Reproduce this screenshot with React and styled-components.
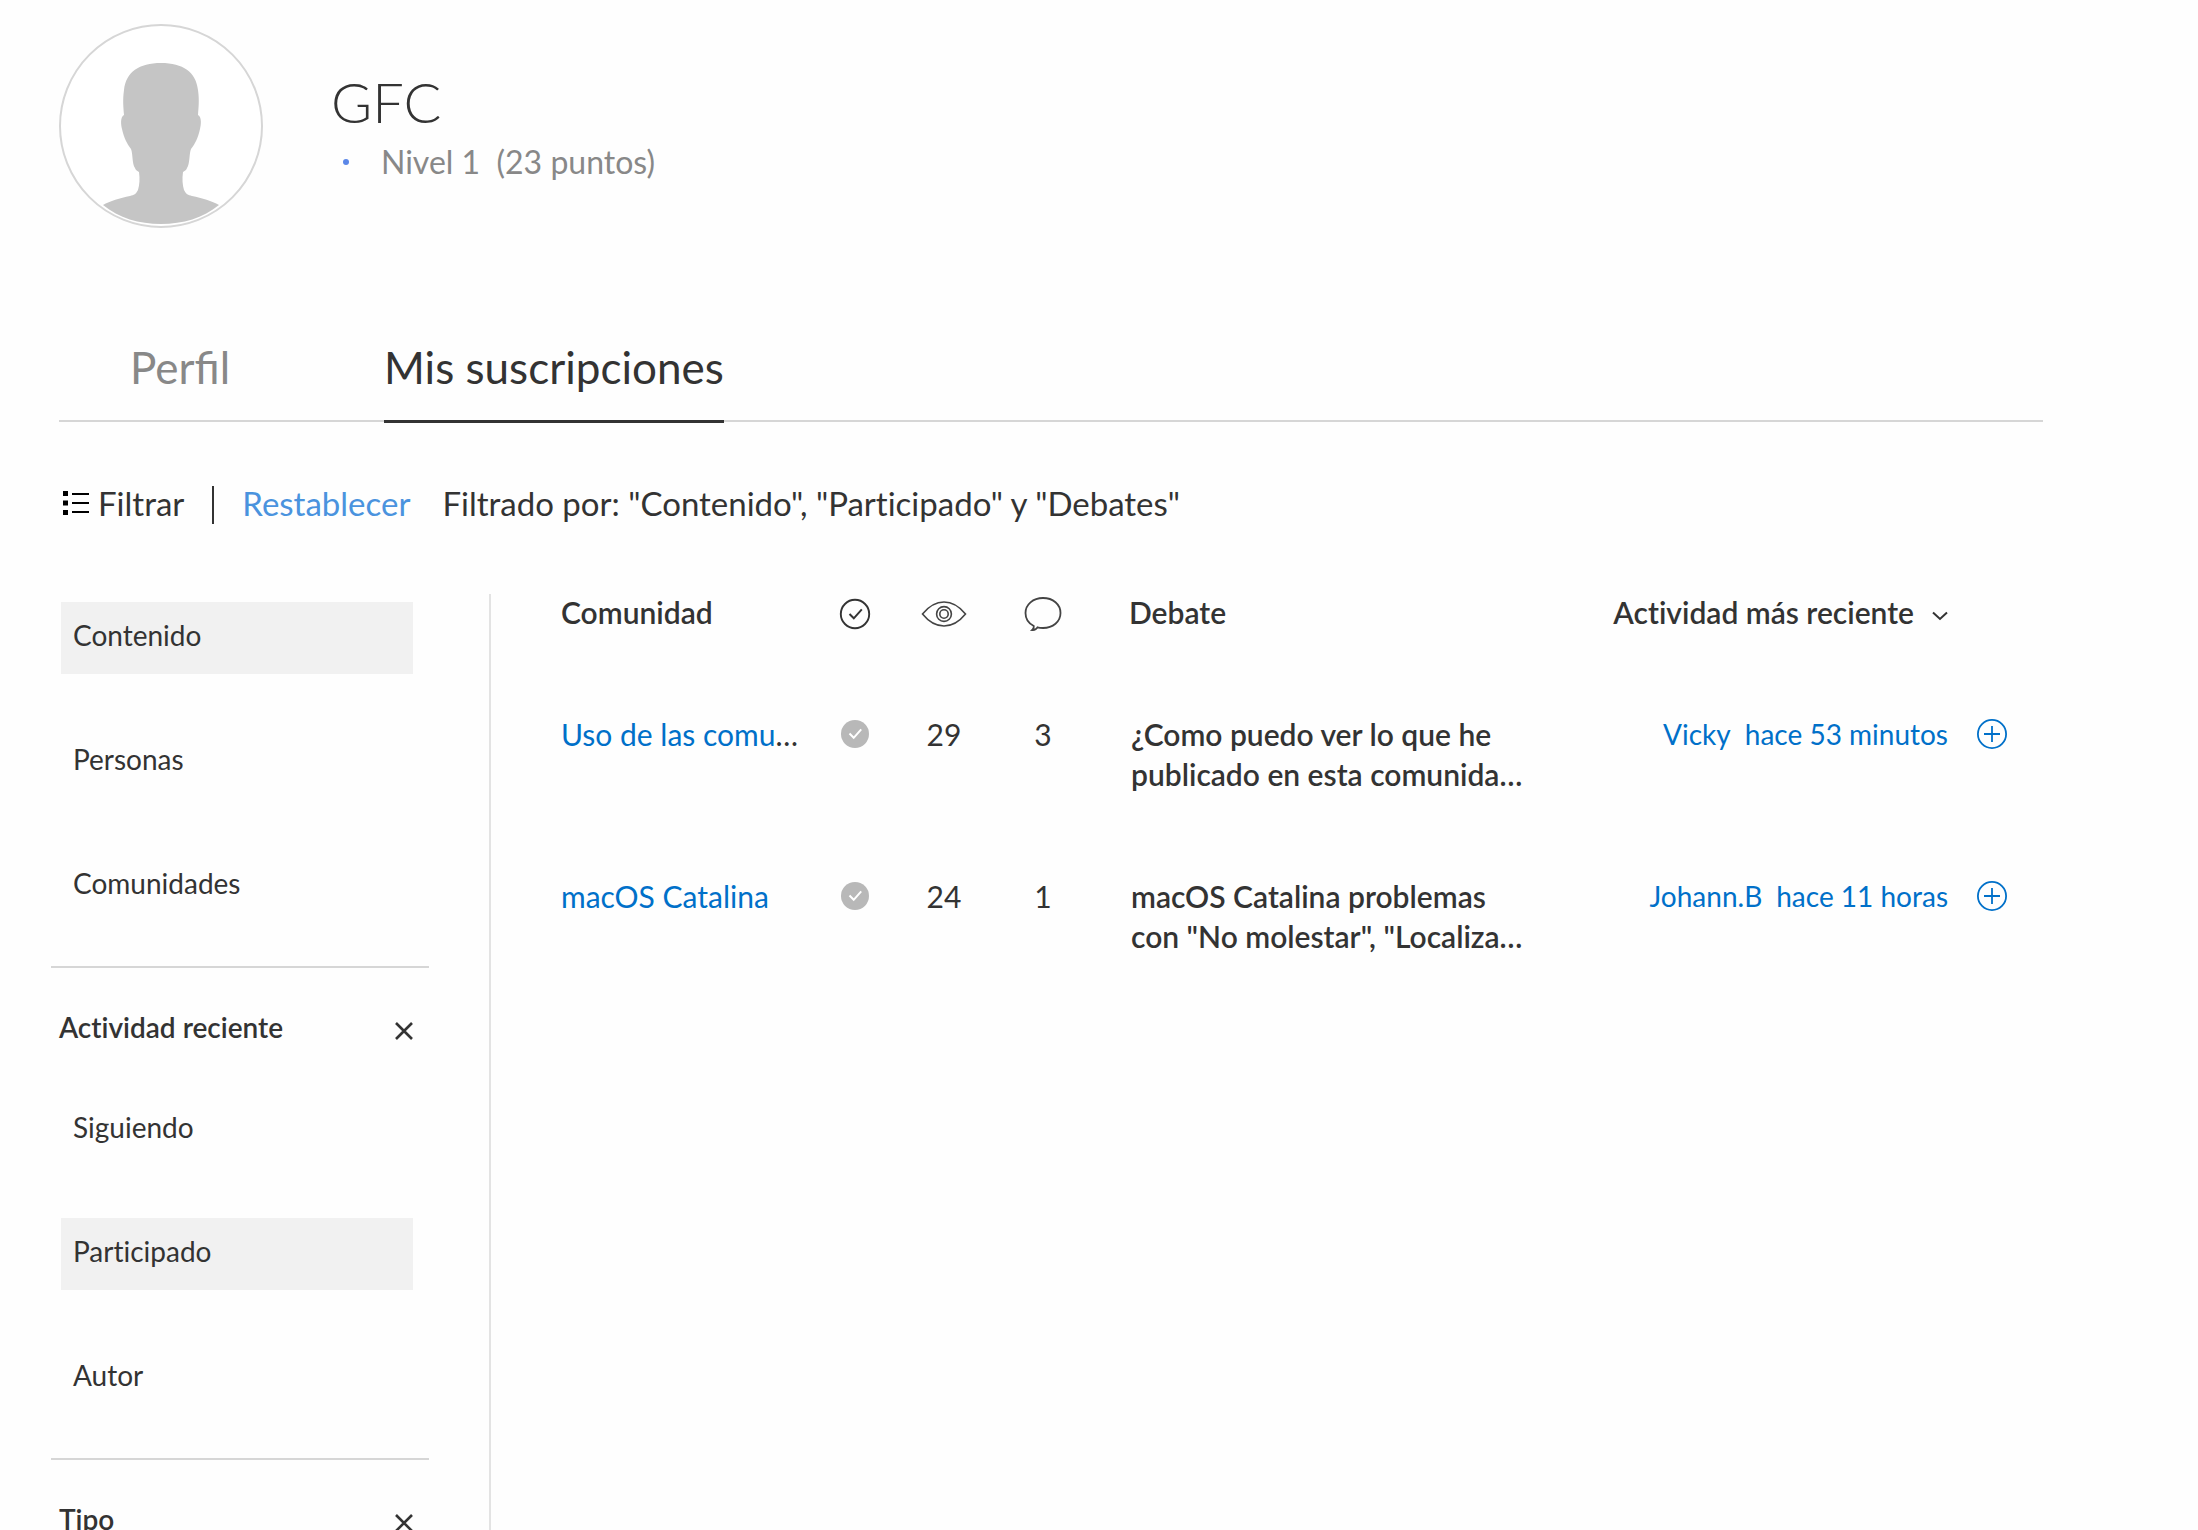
import React from "react";
import styled, { createGlobalStyle, css } from "styled-components";

const GlobalStyle = createGlobalStyle`
  *, *::before, *::after { box-sizing: border-box; }
  body {
    margin: 0;
    overflow: hidden;
    background: #fefefe;
    color: #333;
    font-family: Lato, "Open Sans", "Noto Sans", sans-serif;
    font-size: 28px;
    line-height: 36px;
    font-variant-ligatures: none;
  }
  h1, h2, p, ul { margin: 0; padding: 0; font: inherit; font-variant-ligatures: inherit; }
  ul { list-style: none; }
  a { color: inherit; text-decoration: none; }
  svg { display: block; }
`;

const plainButton = css`
  margin: 0;
  padding: 0;
  border: 0;
  background: none;
  color: inherit;
  font: inherit;
  font-variant-ligatures: inherit;
  cursor: pointer;
`;

const Page = styled.div`
  display: flex;
  flex-direction: column;
  height: 100vh;
  padding: 24px 155px 0 59px;
`;

const ProfileHeader = styled.header`
  display: flex;
  gap: 68px;
  margin-bottom: 113px;
`;

const Avatar = styled.svg`
  width: 204px;
  height: 204px;
`;

const Identity = styled.div`
  padding-top: 42px;
`;

const UserName = styled.h1`
  margin-bottom: 2px;
  font-size: 56px;
  font-weight: 300;
  line-height: 72px;
`;

const Level = styled.p`
  display: flex;
  align-items: center;
  color: #888;
  font-size: 32px;
  line-height: 44px;
  padding-left: 12px;
  gap: 32px;

  &::before {
    content: "";
    width: 6px;
    height: 6px;
    border-radius: 50%;
    background: #5b87e8;
  }
`;

const Tabs = styled.nav`
  display: flex;
  flex-shrink: 0;
  gap: 154px;
  padding-left: 71px;
  border-bottom: 2px solid #d6d6d6;
  font-size: 44px;
  font-variant-ligatures: common-ligatures;
  line-height: 52px;
`;

const Tab = styled.a`
  margin-bottom: -3px;
  padding-bottom: 27px;
  border-bottom: 3px solid ${(p) => (p.$active ? "#333" : "transparent")};
  color: ${(p) => (p.$active ? "#333" : "#888")};
`;

const FilterBar = styled.div`
  display: flex;
  align-items: flex-start;
  margin-top: 62px;
  padding-left: 4px;
  font-size: 33px;
  line-height: 38px;
`;

const FilterButton = styled.button`
  ${plainButton}
  display: flex;
  align-items: center;
  gap: 8px;
`;

const Separator = styled.span`
  width: 2px;
  height: 38px;
  margin: 2px 28px 0;
  background: #333;
`;

const ResetButton = styled.button`
  ${plainButton}
  margin-right: 32px;
  color: #4a93de;
`;

const Columns = styled.div`
  display: flex;
  flex: 1;
  min-height: 0;
  margin-top: 70px;
`;

const Sidebar = styled.aside`
  width: 432px;
  flex-shrink: 0;
  padding-top: 8px;
  border-right: 2px solid #e3e3e3;
`;

const FilterGroup = styled.section`
  & + & {
    width: 378px;
    margin: 44px 0 0 -8px;
    padding: 41px 16px 0 8px;
    border-top: 2px solid #d6d6d6;
  }
`;

const GroupHeading = styled.div`
  display: flex;
  justify-content: space-between;
  align-items: center;
  margin-bottom: 49px;
  font-weight: 600;
`;

const CloseButton = styled.button`
  ${plainButton}
  padding-top: 7px;
`;

const OptionList = styled.ul`
  display: grid;
  gap: 52px;
  width: 354px;
  padding-left: 2px;
`;

const Option = styled.button`
  ${plainButton}
  display: block;
  width: 100%;
  padding: 15px 12px 21px;
  background: ${(p) => (p.$selected ? "#f1f1f1" : "none")};
  text-align: left;
`;

const Main = styled.main`
  flex: 1;
  min-width: 0;
  padding-left: 70px;
`;

const Table = styled.table`
  width: 100%;
  table-layout: fixed;
  border-collapse: collapse;
  font-size: 30px;
`;

const Col = styled.col`
  width: ${(p) => p.$width}px;
`;

const HeadCell = styled.th`
  padding: 0 0 39px ${(p) => (p.$inset ? "33px" : "0")};
  font-weight: 600;
  text-align: ${(p) => p.$align || "left"};
  vertical-align: top;
  white-space: nowrap;
`;

const Cell = styled.td`
  padding: 41px 0 41px ${(p) => (p.$inset ? "35px" : "0")};
  line-height: 40px;
  text-align: ${(p) => p.$align || "left"};
  vertical-align: top;
  white-space: nowrap;
`;

const IconBox = styled.span`
  display: flex;
  align-items: center;
  justify-content: center;
  height: 40px;
`;

const SortButton = styled.button`
  ${plainButton}
  display: inline-flex;
  align-items: center;
  gap: 18px;

  svg { margin-top: 8px; }
`;

const BlueLink = styled.a`
  color: #0070c9;
`;

const Topic = styled.a`
  display: block;
  font-weight: 600;
`;

const Activity = styled.span`
  display: flex;
  justify-content: flex-end;
  gap: 14px;
  font-size: 28px;
`;

const FollowButton = styled.button`
  ${plainButton}
  display: flex;
  align-items: center;
  height: 40px;
  margin-left: 29px;
  color: #0070c9;
`;

const AvatarImage = () => (
  <Avatar viewBox="0 0 204 204" role="img" aria-label="Avatar de GFC">
    <circle cx="102" cy="102" r="101" fill="#fff" stroke="#d6d6d6" strokeWidth="2" />
    <path
      fill="#c5c5c5"
      d="M102 39C80 39 67 48 65 66C63.500 76 64.500 84 65 91C61 93 62 101 63 105C65 114 68 120 72 125C74 130 73 140 76 144C77 147 79 147 80 148C81 155 80.500 161 79 166C77 170 75 171 71 172C61 174 51 177 44 181C60 194 80 200 102 200C124 200 144 194 160 181C153 177 143 174 133 172C129 171 127 170 125 166C123.500 161 123 155 124 148C125 147 127 147 128 144C131 140 130 130 132 125C136 120 139 114 141 105C142 101 143 93 139 91C139.500 84 140.500 76 139 66C137 48 124 39 102 39Z"
    />
  </Avatar>
);

const ListIcon = () => (
  <svg width="27" height="24" viewBox="0 0 27 24" aria-hidden="true">
    <path d="M0 0h5v5H0zM0 9.500h5v5H0zM0 19h5v5H0z" fill="#000" />
    <path d="M9 3h17M9 12h17M9 21h17" stroke="#000" strokeWidth="2" />
  </svg>
);

const CloseIcon = () => (
  <svg width="18" height="18" viewBox="0 0 18 18" aria-hidden="true">
    <path d="M1 1l16 16M17 1L1 17" stroke="#333" strokeWidth="2.600" />
  </svg>
);

const CheckOutline = () => (
  <svg width="32" height="32" viewBox="0 0 32 32" role="img" aria-label="Resuelto">
    <circle cx="16" cy="16" r="14.200" fill="none" stroke="#333" strokeWidth="1.900" />
    <path d="M10.500 16l4.300 4.300 8-9" fill="none" stroke="#333" strokeWidth="2" />
  </svg>
);

const EyeIcon = () => (
  <svg width="46" height="28" viewBox="0 0 46 28" role="img" aria-label="Visitas">
    <g fill="none" stroke="#444" strokeWidth="1.600">
      <path d="M1.500 14C8 6 15 2 23 2s15 4 21.500 12C38 22 31 26 23 26S8 22 1.500 14z" />
      <circle cx="23" cy="14" r="7.400" />
      <circle cx="23" cy="14" r="4.200" />
    </g>
  </svg>
);

const BubbleIcon = () => (
  <svg width="38" height="36" viewBox="0 0 38 36" role="img" aria-label="Respuestas">
    <path
      d="M19 2C9 2 1.500 8.500 1.500 17c0 6 3.400 10.600 8.300 13 .2 1.600-.4 3-1.600 4 2.400.2 4.300-.8 5.300-2.600 1.800.5 3.500.6 5.500.6 10 0 17.500-6.400 17.500-15S29 2 19 2z"
      fill="none"
      stroke="#444"
      strokeWidth="1.800"
    />
  </svg>
);

const ChevronIcon = () => (
  <svg width="16" height="10" viewBox="0 0 16 10" aria-hidden="true">
    <path d="M1 1.500l7 6.500 7-6.500" fill="none" stroke="#333" strokeWidth="2" />
  </svg>
);

const CheckBadge = () => (
  <svg width="28" height="28" viewBox="0 0 28 28" role="img" aria-label="Resuelto">
    <circle cx="14" cy="14" r="14" fill="#b8b8b8" />
    <path d="M8.500 13.500l4.200 4.300 7.500-8.500" fill="none" stroke="#fff" strokeWidth="2" />
  </svg>
);

const PlusIcon = () => (
  <svg width="30" height="30" viewBox="0 0 30 30" aria-hidden="true">
    <circle cx="15" cy="15" r="14.100" fill="none" stroke="currentColor" strokeWidth="1.800" />
    <path d="M15 7v16M7 15h16" stroke="currentColor" strokeWidth="1.800" />
  </svg>
);

const groups = [
  { options: ["Contenido", "Personas", "Comunidades"], selected: "Contenido" },
  { title: "Actividad reciente", options: ["Siguiendo", "Participado", "Autor"], selected: "Participado" },
  { title: "Tipo", options: [] },
];

const discussions = [
  {
    community: "Uso de las comu",
    clipped: true,
    views: 29,
    replies: 3,
    topic: ["¿Como puedo ver lo que he", "publicado en esta comunida…"],
    author: "Vicky",
    time: "hace 53 minutos",
  },
  {
    community: "macOS Catalina",
    views: 24,
    replies: 1,
    topic: ["macOS Catalina problemas", 'con "No molestar", "Localiza…'],
    author: "Johann.B",
    time: "hace 11 horas",
  },
];

export default function App() {
  return (
    <>
      <GlobalStyle />
      <Page>
        <ProfileHeader>
          <AvatarImage />
          <Identity>
            <UserName>GFC</UserName>
            <Level>Nivel 1&nbsp; (23 puntos)</Level>
          </Identity>
        </ProfileHeader>

        <Tabs>
          <Tab href="#perfil">Perfil</Tab>
          <Tab href="#suscripciones" $active aria-current="page">Mis suscripciones</Tab>
        </Tabs>

        <FilterBar>
          <FilterButton type="button">
            <ListIcon />
            Filtrar
          </FilterButton>
          <Separator />
          <ResetButton type="button">Restablecer</ResetButton>
          <p>Filtrado por: "Contenido", "Participado" y "Debates"</p>
        </FilterBar>

        <Columns>
          <Sidebar>
            {groups.map((group, i) => (
              <FilterGroup key={i}>
                {group.title && (
                  <GroupHeading>
                    <h2>{group.title}</h2>
                    <CloseButton type="button" aria-label={`Quitar ${group.title}`}>
                      <CloseIcon />
                    </CloseButton>
                  </GroupHeading>
                )}
                <OptionList>
                  {group.options.map((name) => (
                    <li key={name}>
                      <Option
                        type="button"
                        $selected={name === group.selected}
                        aria-pressed={name === group.selected}
                      >
                        {name}
                      </Option>
                    </li>
                  ))}
                </OptionList>
              </FilterGroup>
            ))}
          </Sidebar>

          <Main>
            <Table>
              <colgroup>
                <Col $width={250} />
                <Col $width={87} />
                <Col $width={92} />
                <Col $width={106} />
                <col />
                <Col $width={388} />
                <Col $width={95} />
              </colgroup>
              <thead>
                <tr>
                  <HeadCell scope="col">Comunidad</HeadCell>
                  <HeadCell scope="col"><IconBox><CheckOutline /></IconBox></HeadCell>
                  <HeadCell scope="col"><IconBox><EyeIcon /></IconBox></HeadCell>
                  <HeadCell scope="col"><IconBox><BubbleIcon /></IconBox></HeadCell>
                  <HeadCell scope="col" $inset>Debate</HeadCell>
                  <HeadCell scope="col" $align="right">
                    <SortButton type="button">
                      Actividad más reciente
                      <ChevronIcon />
                    </SortButton>
                  </HeadCell>
                  <HeadCell as="td" />
                </tr>
              </thead>
              <tbody>
                {discussions.map((d) => (
                  <tr key={d.community}>
                    <Cell>
                      <BlueLink href="#comunidad">{d.community}</BlueLink>
                      {d.clipped && "…"}
                    </Cell>
                    <Cell><IconBox><CheckBadge /></IconBox></Cell>
                    <Cell $align="center">{d.views}</Cell>
                    <Cell $align="center">{d.replies}</Cell>
                    <Cell $inset>
                      <Topic href="#debate">
                        {d.topic[0]}
                        <br />
                        {d.topic[1]}
                      </Topic>
                    </Cell>
                    <Cell>
                      <Activity>
                        <BlueLink href="#autor">{d.author}</BlueLink>
                        <BlueLink href="#actividad">{d.time}</BlueLink>
                      </Activity>
                    </Cell>
                    <Cell>
                      <FollowButton type="button" aria-label="Seguir debate">
                        <PlusIcon />
                      </FollowButton>
                    </Cell>
                  </tr>
                ))}
              </tbody>
            </Table>
          </Main>
        </Columns>
      </Page>
    </>
  );
}
